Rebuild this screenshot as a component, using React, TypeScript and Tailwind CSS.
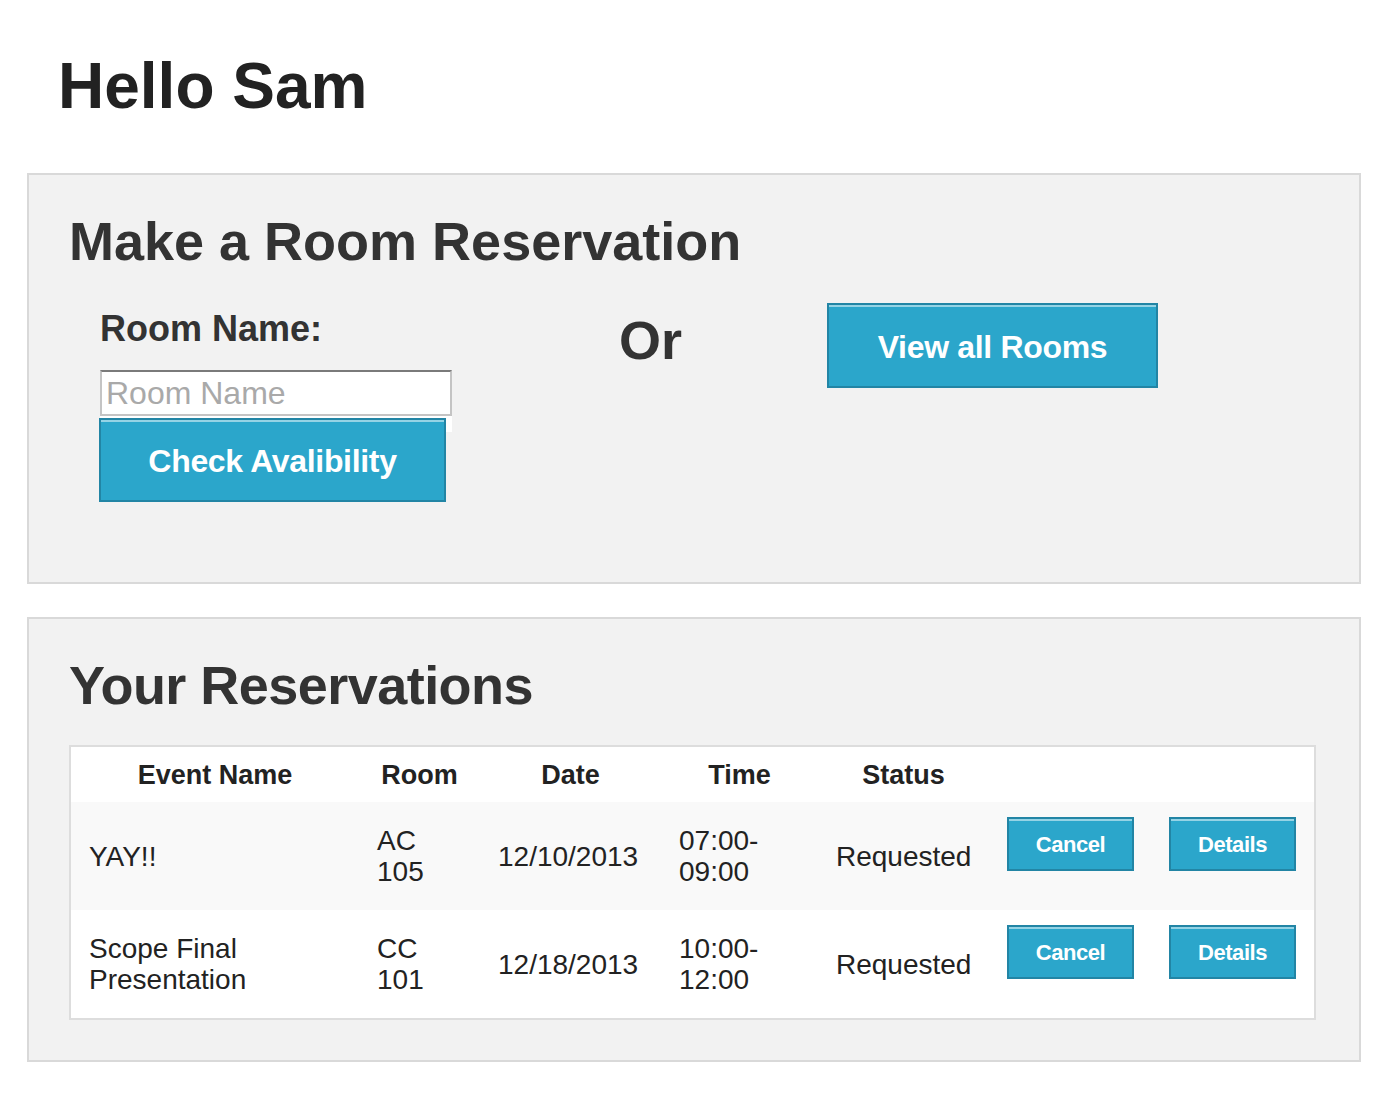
const reservations = [
  { event: ['YAY!!'], room: ['AC', '105'], date: '12/10/2013', time: ['07:00-', '09:00'], status: 'Requested' },
  { event: ['Scope Final', 'Presentation'], room: ['CC', '101'], date: '12/18/2013', time: ['10:00-', '12:00'], status: 'Requested' },
];

const btn =
  'bg-[#2ba6cb] border-2 border-[#2285a5] shadow-[inset_0_2px_0_rgba(255,255,255,0.5)] text-white font-bold';

function Lines({ lines }: { lines: string[] }) {
  return (
    <>
      {lines.map((l, i) => (
        <div key={i}>{l}</div>
      ))}
    </>
  );
}

export default function App() {
  return (
    <div className="min-h-screen bg-white pb-[31px] font-['Liberation_Sans',Arial,sans-serif] text-[#222]">
      <h1 className="pl-[58px] pt-[54px] text-[64px] font-bold leading-none text-[#222]">Hello Sam</h1>

      {/* Reservation form */}
      <div className="ml-[27px] mt-[55px] w-[1334px] border-2 border-[#d9d9d9] bg-[#f2f2f2] pl-[40px] pr-[40px] pt-[39px] pb-[40px]">
        <h2 className="mb-[35px] text-[54px] font-bold leading-none text-[#333]">Make a Room Reservation</h2>
        <div className="flex items-start">
          <div className="ml-[31px] w-[353px]">
            <div className="mt-[8px] text-[36px] font-bold leading-none text-[#333]">Room Name:</div>
            <input
              type="text"
              placeholder="Room Name"
              className="mt-[23px] block h-[46px] w-[352px] border-2 border-[#c4c4c4] border-t-[#7a7a7a] bg-white pl-[4px] text-[32px] leading-none text-[#333] outline-none placeholder:text-[#a9a9a9]"
            />
            <div className="h-[16px] w-[352px] bg-white" />
            <button className={`${btn} relative -ml-px -mt-[14px] block h-[84px] w-[347px] pt-[2px] text-[32px] tracking-[-0.01em]`}>
              Check Avalibility
            </button>
          </div>
          <div className="w-[374px] pl-[166px] pt-[10px] text-[54px] font-bold leading-none text-[#333]">Or</div>
          <button className={`${btn} h-[85px] w-[331px] pt-[2px] text-[32px] tracking-[-0.01em]`}>View all Rooms</button>
        </div>
        <div className="h-[40px]" />
      </div>

      {/* Reservations table */}
      <div className="ml-[27px] mt-[33px] w-[1334px] border-2 border-[#d9d9d9] bg-[#f2f2f2] pl-[40px] pr-[40px] pt-[39px] pb-[40px]">
        <h2 className="mb-[33px] text-[54px] font-bold leading-none tracking-[-0.01em] text-[#333]">Your Reservations</h2>
        <div className="w-[1247px] border-2 border-[#dddddd] bg-white">
          <table className="w-full table-fixed border-collapse">
            <colgroup>
              <col className="w-[288px]" />
              <col className="w-[121px]" />
              <col className="w-[181px]" />
              <col className="w-[157px]" />
              <col className="w-[171px]" />
              <col className="w-[162px]" />
              <col className="w-[163px]" />
            </colgroup>
            <thead>
              <tr className="h-[55px] bg-white text-[27px] font-bold leading-[30px] text-[#222]">
                <th className="px-[18px] text-center align-middle">Event Name</th>
                <th className="px-[18px] text-center align-middle">Room</th>
                <th className="px-[18px] text-center align-middle">Date</th>
                <th className="px-[18px] text-center align-middle">Time</th>
                <th className="px-[18px] text-center align-middle">Status</th>
                <th />
                <th />
              </tr>
            </thead>
            <tbody>
              {reservations.map((r, i) => (
                <tr
                  key={i}
                  className={`h-[108px] text-[28px] leading-[31px] text-[#222] ${i % 2 === 0 ? 'bg-[#f9f9f9]' : 'bg-white'}`}
                >
                  <td className="px-[18px] align-middle">
                    <Lines lines={r.event} />
                  </td>
                  <td className="px-[18px] align-middle">
                    <Lines lines={r.room} />
                  </td>
                  <td className="whitespace-nowrap px-[18px] align-middle">{r.date}</td>
                  <td className="px-[18px] align-middle">
                    <Lines lines={r.time} />
                  </td>
                  <td className="whitespace-nowrap px-[18px] align-middle">{r.status}</td>
                  <td className="px-[18px] align-middle">
                    <button className={`${btn} mb-[24px] block h-[54px] w-[127px] text-[22px] tracking-[-0.02em]`}>Cancel</button>
                  </td>
                  <td className="px-[18px] align-middle">
                    <button className={`${btn} mb-[24px] block h-[54px] w-[127px] text-[22px] tracking-[-0.02em]`}>Details</button>
                  </td>
                </tr>
              ))}
            </tbody>
          </table>
        </div>
      </div>
    </div>
  );
}
